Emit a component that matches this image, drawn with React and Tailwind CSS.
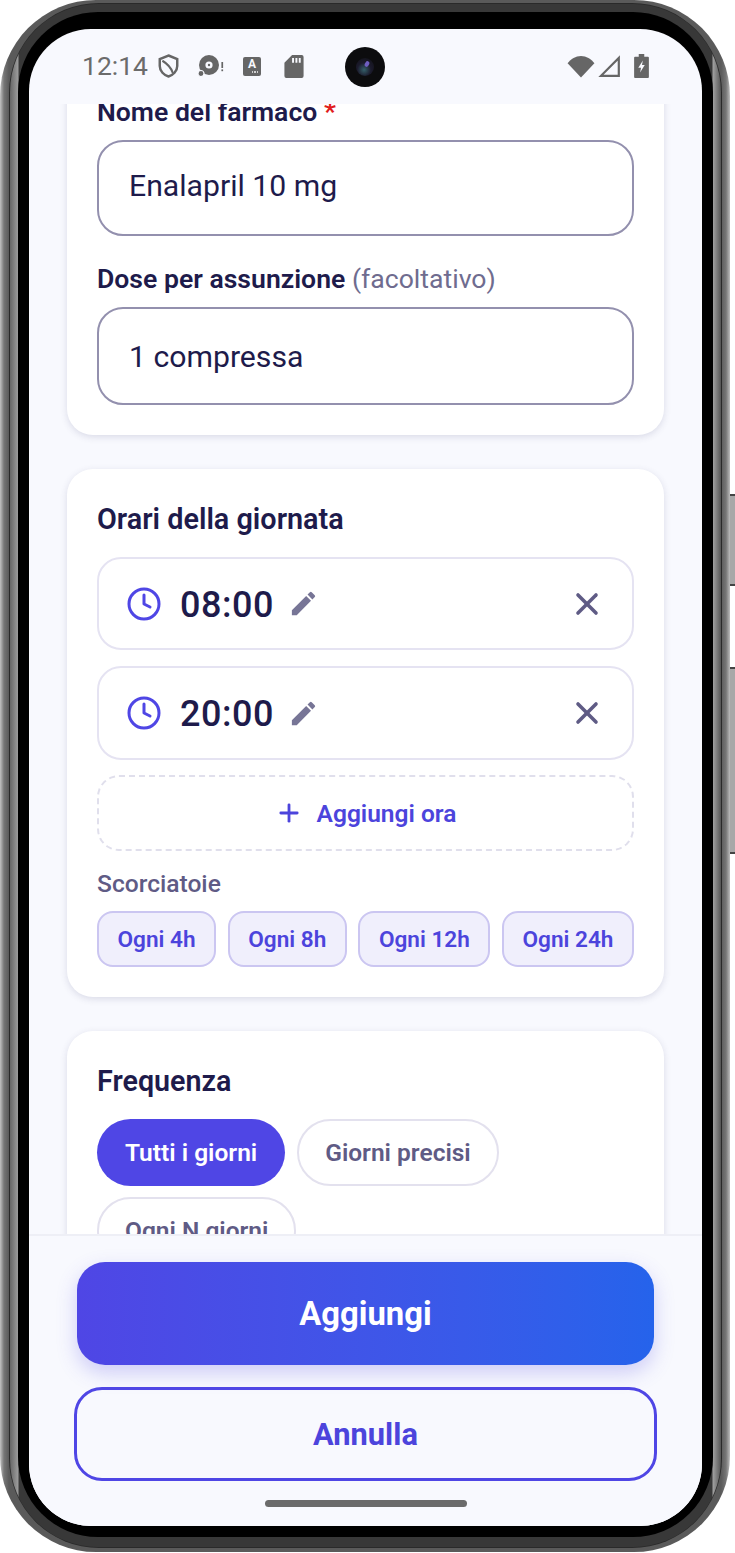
import { Clock, Plus, X } from "lucide-react";

const TIMES = ["08:00", "20:00"];
const SHORTCUTS = ["Ogni 4h", "Ogni 8h", "Ogni 12h", "Ogni 24h"];

function PencilIcon() {
  return (
    <svg viewBox="0 0 24 24" className="ml-[14px] h-[31px] w-[31px]" fill="#777596">
      <path d="M3 17.25V21h3.75L17.81 9.94l-3.75-3.75L3 17.25zM20.71 7.04a1 1 0 0 0 0-1.41l-2.34-2.34a1 1 0 0 0-1.41 0l-1.83 1.83 3.75 3.75 1.83-1.83z" />
    </svg>
  );
}

function StatusBar() {
  return (
    <div className="relative flex h-[75px] shrink-0 items-center justify-between pl-[53px] pr-[53px] pb-[1px]">
      <div className="flex items-center text-[#6b6b6b]">
        <span className="text-[26.5px] leading-none">12:14</span>
        <svg viewBox="0 0 24 28" className="ml-[10px] h-[26px] w-[21px]" fill="none" stroke="#666" strokeWidth="2.8">
          <path d="M12 2 L22 6 V14 C22 20 17 24.5 12 26 C7 24.5 2 20 2 14 V6 Z" />
          <path d="M5 8 C10 11 15 16 17 22" strokeWidth="2.4" />
        </svg>
        <svg viewBox="0 0 26 22" className="ml-[19px] h-[22px] w-[26px]" fill="#666">
          <circle cx="11" cy="10" r="10" />
          <circle cx="11" cy="10" r="3.6" fill="#f8f9fe" />
          <circle cx="11" cy="10" r="1.2" />
          <circle cx="3" cy="18.5" r="3" stroke="#f8f9fe" strokeWidth="1.2" />
          <rect x="23.4" y="7" width="1.7" height="6" />
          <rect x="23.4" y="14.4" width="1.7" height="1.8" />
        </svg>
        <div className="ml-[19px] flex h-[19px] w-[18px] flex-col items-center rounded-[2px] bg-[#666] text-[12px] font-bold leading-[14px] text-[#f8f9fe]">
          A
          <div className="ml-[6px] flex gap-[1px]">
            <div className="h-[2px] w-[1.5px] bg-[#d0d0d0]" />
            <div className="h-[2px] w-[1.5px] bg-[#d0d0d0]" />
            <div className="h-[2px] w-[1.5px] bg-[#d0d0d0]" />
          </div>
        </div>
        <svg viewBox="0 0 20 24" className="ml-[23px] h-[23px] w-[20px]" fill="#666">
          <path fillRule="evenodd" d="M8 0h10a2 2 0 0 1 2 2v20a2 2 0 0 1-2 2H2a2 2 0 0 1-2-2V8zM8 3v5h2V3zm3.5 0v5h2V3zm3.5 0v5h2V3z" />
        </svg>
      </div>
      <div className="absolute left-[316px] top-[18px] flex h-[40px] w-[40px] items-center justify-center rounded-full bg-[#0c0c0e]">
        <div className="relative h-[18px] w-[18px] rounded-full bg-[radial-gradient(circle_at_45%_65%,#35606a_0,#1b1a2c_45%,#101014_100%)]">
          <div className="absolute left-[9px] top-[3px] h-[6px] w-[4px] rotate-[30deg] rounded-full bg-[#6f5fc0]" />
        </div>
      </div>
      <div className="flex items-center">
        <svg viewBox="0 0 28 24" className="h-[23px] w-[28px]" fill="#666">
          <path d="M14 23.5 L0 8.5 C3.5 4 8.5 1 14 1 C19.5 1 24.5 4 28 8.5 Z" />
        </svg>
        <svg viewBox="0 0 22 22" className="ml-[3px] h-[22px] w-[22px]" fill="none" stroke="#666" strokeWidth="2.2">
          <path d="M20.8 3 V20.8 H3 Z" />
        </svg>
        <svg viewBox="0 0 16 26" className="ml-[14px] h-[24px] w-[15px]" fill="#666">
          <path fillRule="evenodd" d="M5 0h6v3h4a1 1 0 0 1 1 1v21a1 1 0 0 1-1 1H1a1 1 0 0 1-1-1V4a1 1 0 0 1 1-1h4zM9.5 7 4.5 15h3l-1 5 5-8h-3z" />
        </svg>
      </div>
    </div>
  );
}

function TextField({ value, className }) {
  return (
    <div className={`flex items-center rounded-[26px] border-[2.8px] border-[#9390ae] pl-[30px] text-[30.2px] text-[#1e1b4b] ${className}`}>
      {value}
    </div>
  );
}

function Card({ className, children }) {
  return (
    <div className={`rounded-[26px] bg-white px-[30px] pt-[30px] pb-[30px] shadow-[0_2px_7px_rgba(60,60,110,0.16)] ${className}`}>
      {children}
    </div>
  );
}

function TimeRow({ time, className }) {
  return (
    <div className={`flex items-center rounded-[24px] border-2 border-[#e5e3f2] pl-[27px] pr-[27px] ${className}`}>
      <Clock size={36} color="#4f46e5" strokeWidth={2} />
      <span className="ml-[18px] pt-[2px] text-[36px] font-medium leading-none tracking-[0.5px] text-[#1e1b4b]">{time}</span>
      <PencilIcon />
      <X size={36} color="#5f5b85" strokeWidth={2.4} className="ml-auto" />
    </div>
  );
}

export default function App() {
  return (
    <div className="relative h-[1553px] w-[735px] overflow-hidden bg-white font-['Roboto',sans-serif]">
      <div className="absolute left-[730px] top-[494px] h-[92px] w-[5px] border-y-2 border-[#444] bg-[#a8a8a8]" />
      <div className="absolute left-[730px] top-[667px] h-[187px] w-[5px] border-y-2 border-[#444] bg-[#a8a8a8]" />
      <div className="h-[1552px] w-[730px] rounded-[96px] bg-[linear-gradient(90deg,#c4c4c4_0px,#767676_4px,#5a5a5a_9px,#5a5a5a_721px,#767676_726px,#bdbdbd_730px)] pb-[4px] pl-[9px] pr-[8px] pt-[3px]">
        <div className="h-full rounded-[90px] bg-[#2a2a2a] p-[1px]">
          <div className="h-full rounded-[88px] bg-[linear-gradient(90deg,#666_0px,#9c9c9c_8px,#383838_9px,#383838_calc(100%-9px),#a0a0a0_calc(100%-8px),#555_100%)] px-[8px] pb-[10px] pt-[8px]">
            <div className="h-full rounded-[80px] bg-black pb-[11px] pl-[11px] pr-[11px] pt-[17px]">
              <div className="flex h-full flex-col overflow-hidden rounded-[62px] bg-[#f8f9fe]">
                <StatusBar />

                <div className="h-[1130px] shrink-0 overflow-hidden px-[38px]">
                  <div className="flex flex-col gap-[34px]">
                    <Card className="mt-[-40px]">
                      <div className="h-[36px] text-[26.6px] font-semibold leading-[36px] text-[#1e1b4b]">
                        Nome del farmaco <span className="text-[#e11d1d]">*</span>
                      </div>
                      <TextField value="Enalapril 10 mg" className="mt-[10px] h-[96px] pb-[5px]" />
                      <div className="mt-[25px] h-[36px] text-[26.6px] font-semibold leading-[36px] text-[#1e1b4b]">
                        Dose per assunzione <span className="font-normal text-[#6f6c8f]">(facoltativo)</span>
                      </div>
                      <TextField value="1 compressa" className="mt-[10px] h-[98px] pt-[2px]" />
                    </Card>

                    <Card>
                      <div className="h-[40px] text-[28.8px] font-semibold leading-[41px] text-[#1e1b4b]">Orari della giornata</div>
                      <TimeRow time={TIMES[0]} className="mt-[18px] h-[93px]" />
                      <TimeRow time={TIMES[1]} className="mt-[16px] h-[94px]" />
                      <div className="mt-[15px] flex h-[76px] items-center justify-center rounded-[22px] border-2 border-dashed border-[#e0dfec] text-[24.5px] font-semibold text-[#4c44dc]">
                        <Plus size={28} strokeWidth={2.4} />
                        <span className="ml-[14px] pt-[3px]">Aggiungi ora</span>
                      </div>
                      <div className="mt-[18px] h-[30px] text-[24.6px] font-medium leading-[30px] text-[#5f5b85]">Scorciatoie</div>
                      <div className="mt-[12px] flex justify-between">
                        {SHORTCUTS.map((label) => (
                          <div
                            key={label}
                            className="flex h-[56px] items-center justify-center rounded-[16px] border-2 border-[#cbc6f1] bg-[#f0effc] px-[18.5px] pt-[2px] text-[22.6px] font-semibold text-[#4c44dc]"
                          >
                            {label}
                          </div>
                        ))}
                      </div>
                    </Card>

                    <Card>
                      <div className="h-[40px] text-[28.7px] font-semibold leading-[41px] text-[#1e1b4b]">Frequenza</div>
                      <div className="mt-[18px] flex flex-wrap gap-x-[12px] gap-y-[11px]">
                        <div className="flex h-[67px] items-center rounded-full bg-[#4f46e5] px-[28px] pt-[2px] text-[24.5px] font-semibold text-white">
                          Tutti i giorni
                        </div>
                        <div className="flex h-[67px] items-center rounded-full border-2 border-[#e3e1ee] px-[26px] pt-[2px] text-[24.5px] font-semibold text-[#5f5b85]">
                          Giorni precisi
                        </div>
                        <div className="flex h-[67px] items-center rounded-full border-2 border-[#e3e1ee] px-[26px] pt-[2px] text-[24.5px] font-semibold text-[#5f5b85]">
                          Ogni N giorni
                        </div>
                      </div>
                    </Card>
                  </div>
                </div>

                <div className="relative flex-1 border-t-2 border-[#eeeff6] bg-[#f8f9fe] px-[48px] pt-[26px]">
                  <div className="flex h-[103px] items-center justify-center rounded-[28px] bg-gradient-to-r from-[#4f46e5] to-[#2563eb] pt-[3px] text-[32.8px] font-bold text-white shadow-[0_8px_20px_rgba(79,70,229,0.25)]">
                    Aggiungi
                  </div>
                  <div className="mx-[-3px] mt-[22px] flex h-[94px] items-center justify-center rounded-[28px] border-[3px] border-[#4f46e5] pt-[2px] text-[30.8px] font-bold text-[#4c44dc]">
                    Annulla
                  </div>
                  <div className="mx-auto mt-[19px] h-[7px] w-[202px] rounded-full bg-[#6b6b6b]" />
                </div>
              </div>
            </div>
          </div>
        </div>
      </div>
    </div>
  );
}
